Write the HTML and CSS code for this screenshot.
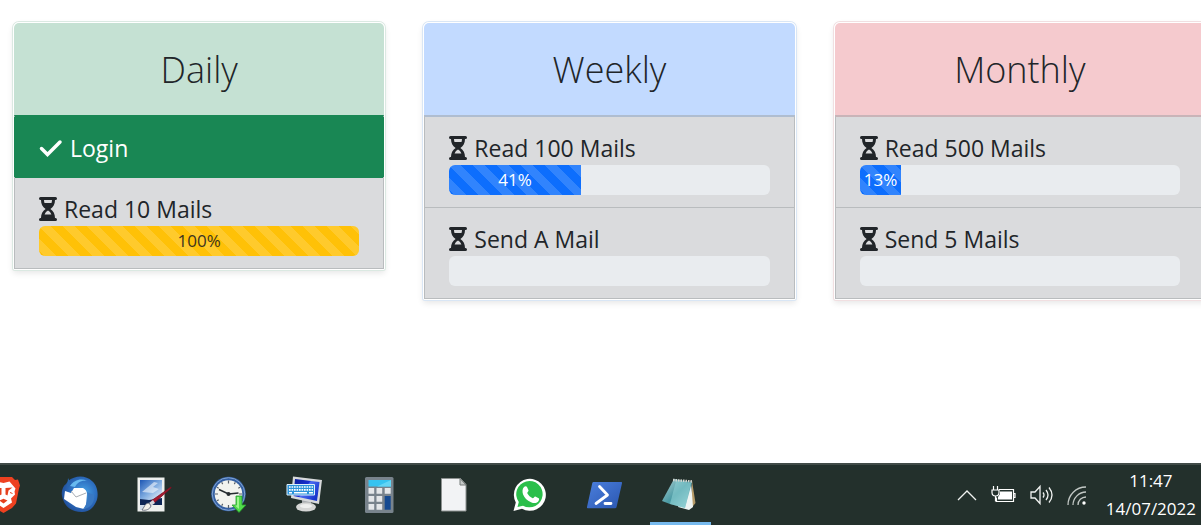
FILE: index.html
```html
<!DOCTYPE html>
<html lang="en">
<head>
    <meta charset="UTF-8">
    <meta name="viewport" content="width=device-width, initial-scale=1.0">
    <title>Quests</title>
    <link rel="stylesheet" href="styles.css">
</head>
<body>
    <!-- Shared icons -->
    <svg class="sprite" aria-hidden="true">
        <symbol id="hourglass" viewBox="0 0 18 24">
            <path d="M1.500 0h15a1.500 1.500 0 0 1 0 3H16c0 4-1.500 7-4.600 9 3.100 2 4.600 5 4.600 9h.5a1.500 1.500 0 0 1 0 3h-15a1.500 1.500 0 0 1 0-3H2c0-4 1.500-7 4.600-9C3.500 10 2 7 2 3h-.5a1.500 1.500 0 0 1 0-3zM5 3c0 1.100.2 2.100.5 3h7c.3-.9.5-1.900.5-3zm4 10.500c-1.500.8-2.700 2.200-3.400 4h6.800c-.7-1.800-1.900-3.200-3.400-4z" fill="currentColor" fill-rule="evenodd"/>
        </symbol>
    </svg>

    <main class="quests">
        <section class="card daily">
            <h2>Daily</h2>
            <ul>
                <li class="done">
                    <div class="title">
                        <svg class="check" viewBox="0 0 24 18"><path d="M2.500 9.500l6 6L21 3" fill="none" stroke="currentColor" stroke-width="3.500" stroke-linecap="round"/></svg>
                        Login
                    </div>
                </li>
                <li>
                    <div class="title"><svg class="glass"><use href="#hourglass"/></svg>Read 10 Mails</div>
                    <div class="progress" role="progressbar" aria-label="Read 10 Mails" aria-valuenow="100">
                        <div class="bar full" style="width: 100%">100%</div>
                    </div>
                </li>
            </ul>
        </section>

        <section class="card weekly">
            <h2>Weekly</h2>
            <ul>
                <li>
                    <div class="title"><svg class="glass"><use href="#hourglass"/></svg>Read 100 Mails</div>
                    <div class="progress" role="progressbar" aria-label="Read 100 Mails" aria-valuenow="41">
                        <div class="bar" style="width: 41%">41%</div>
                    </div>
                </li>
                <li>
                    <div class="title"><svg class="glass"><use href="#hourglass"/></svg>Send A Mail</div>
                    <div class="progress" role="progressbar" aria-label="Send A Mail" aria-valuenow="0"></div>
                </li>
            </ul>
        </section>

        <section class="card monthly">
            <h2>Monthly</h2>
            <ul>
                <li>
                    <div class="title"><svg class="glass"><use href="#hourglass"/></svg>Read 500 Mails</div>
                    <div class="progress" role="progressbar" aria-label="Read 500 Mails" aria-valuenow="13">
                        <div class="bar" style="width: 13%">13%</div>
                    </div>
                </li>
                <li>
                    <div class="title"><svg class="glass"><use href="#hourglass"/></svg>Send 5 Mails</div>
                    <div class="progress" role="progressbar" aria-label="Send 5 Mails" aria-valuenow="0"></div>
                </li>
            </ul>
        </section>
    </main>

    <footer class="taskbar">
        <div class="apps">
            <button aria-label="Brave">
                <svg viewBox="0 0 40 40">
                    <path d="M10 3h17l3 3 3-.5 2 6-1 3-3 15-4 4.500-8.500 5-8.500-5-4-4.500-3-15-1-3 2-6 3 .5z" fill="#ee4120"/>
                    <path d="M18.500 9l6-1.500 6 7-1 3 .5 3-4 4 1 4-8.500 5.500-8.500-5.500 1-4-4-4 .5-3-1-3 6-7z" fill="#fff"/>
                    <path d="M20.500 14l7-.5-4 3-1 5-2-1zM16.500 14l-7-.5 4 3 1 5 2-1z" fill="#e5401d"/>
                    <path d="M14.500 26.500l4-1.800 4 1.800-4 3z" fill="#e5401d"/>
                    <path d="M27.500 19.500l-2.500-1M9.500 19.500l2.500-1" stroke="#e5401d" stroke-width="1"/>
                </svg>
            </button>
            <button aria-label="Thunderbird">
                <svg viewBox="0 0 40 40">
                    <defs>
                        <radialGradient id="bird" cx=".6" cy=".45" r=".6"><stop offset="0" stop-color="#48a3e6"/><stop offset=".6" stop-color="#2d6fc0"/><stop offset="1" stop-color="#21509c"/></radialGradient>
                    </defs>
                    <path d="M2 22C1 17 3 12 6 10l2-3C15 1 26 1 32 7c6 5 7 15 4 21-3 7-8 10-14 10C11 38 4 32 2 22z" fill="url(#bird)"/>
                    <path d="M10 12C14 6 21 4 27 7c-6-1-10 2-12 6" fill="#67b9ef"/>
                    <path d="M8 4l3 6-4 5z" fill="#2864ad"/>
                    <path d="M5 17l6 2 3-5 9 0c2 1 4 3 4 6l-1 11-2 4-8-2L4 25z" fill="#fff"/>
                    <path d="M11 17l5 6 10-4" fill="none" stroke="#a9aeb4" stroke-width="1"/>
                    <path d="M27 18c2 5 0 13-4 17 8-1 12-7 11-14" fill="#3979c3"/>
                </svg>
            </button>
            <button aria-label="Paint">
                <svg viewBox="0 0 40 40">
                    <defs>
                        <linearGradient id="sky" x1="0" y1="0" x2="1" y2="1"><stop offset="0" stop-color="#1c56b4"/><stop offset=".5" stop-color="#7eabe0"/><stop offset="1" stop-color="#f3f8fc"/></linearGradient>
                    </defs>
                    <path d="M2.500 3.500h27v34h-27z" fill="#eef0ee"/>
                    <path d="M5 6h22v20H5z" fill="url(#sky)"/>
                    <path d="M7 18l6-5 6-5 4 1-5 4 6 2-6 4z" fill="#fff" opacity=".55"/>
                    <path d="M5 25l9 1 13-2v7H5z" fill="#0d2556"/>
                    <path d="M5 31h11l-8 5H5z" fill="#cfdaea"/>
                    <path d="M36 13L16 27l2 3L36 14z" fill="#a8192f" stroke="#7a1022" stroke-width=".8"/>
                    <path d="M18 26l-4 3 2 3 4-3z" fill="#d5d8de"/>
                    <path d="M14 29c-3 0-4 2-5 4l-2 3c4 1 8-1 9-4z" fill="#f4f1ec" stroke="#555d70" stroke-width=".8"/>
                </svg>
            </button>
            <button aria-label="Scheduler">
                <svg viewBox="0 0 40 40">
                    <circle cx="18.500" cy="20" r="17.300" fill="#3560a3"/>
                    <circle cx="18.500" cy="20" r="16.300" fill="none" stroke="#82a4d2" stroke-width="1"/>
                    <circle cx="18.500" cy="20" r="13.800" fill="#f2f3ef"/>
                    <path d="M18.500 6.500v3M18.500 31v3M5 20h3M29 20h3M11.700 8.300l1 1.800M25.300 8.300l-1 1.800M7 13.200l1.700 1M7 26.800l1.700-1M11.700 31.700l1-1.800M30 13.200l-1.700 1" stroke="#59616a" stroke-width="1.200"/>
                    <path d="M9 15.500l9.500 4.500 10-1" fill="none" stroke="#252b30" stroke-width="1.500"/>
                    <circle cx="18.500" cy="20" r="2" fill="#252b30"/>
                    <path d="M26 22h6v9h4l-7 7.500-7-7.500h4z" fill="#52dc4c" stroke="#249b2c" stroke-width=".8"/>
                    <path d="M27 23h2v12l-4-3.500h2z" fill="#9cf58c"/>
                </svg>
            </button>
            <button aria-label="On-screen keyboard">
                <svg viewBox="0 0 40 40">
                    <defs>
                        <linearGradient id="screen" x1="0" y1="0" x2="1" y2=".6"><stop offset="0" stop-color="#0b1e98"/><stop offset=".5" stop-color="#182fd0"/><stop offset=".55" stop-color="#4c6cf0"/><stop offset="1" stop-color="#1736cc"/></linearGradient>
                    </defs>
                    <path d="M17 25l9 2v6h-9z" fill="#a8acaf"/>
                    <ellipse cx="21" cy="33" rx="10" ry="4.500" fill="#d5d6d5"/>
                    <ellipse cx="21" cy="32" rx="6" ry="2" fill="#eeefee"/>
                    <path d="M8 2.500L37 6l-3 24L6 24z" fill="#d7d9db"/>
                    <path d="M10 5l24.500 3L32 27 8.500 22z" fill="url(#screen)"/>
                    <path d="M2 10.500h27.500v10.500H2z" fill="#2b93da" stroke="#dceefa" stroke-width="1"/>
                    <path d="M4 13h24M4 15.800h24" stroke="#fff" stroke-width="1.700" stroke-dasharray="1.700 .8"/>
                    <path d="M4 18.700h3M9 18.700h13M24 18.700h4" stroke="#fff" stroke-width="1.600"/>
                </svg>
            </button>
            <button aria-label="Calculator">
                <svg viewBox="0 0 40 40">
                    <rect x="5" y="3" width="28.500" height="36" rx="1.500" fill="#78838c"/>
                    <path d="M8.500 6H31v6.500H8.500z" fill="#36c3f0"/>
                    <path d="M31 6v6.500H17z" fill="#62d5f5"/>
                    <path d="M8.500 14h5.700v5.700H8.500zM16.500 14h5.700v5.700h-5.700zM24.700 14h6v5.700h-6zM8.500 22h5.700v5.700H8.500zM16.500 22h5.700v5.700h-5.700zM8.500 30h5.700v5.700H8.500zM16.500 30h5.700v5.700h-5.700z" fill="#e4e7e9"/>
                    <path d="M24.700 22h6v13.700h-6z" fill="#154a91"/>
                </svg>
            </button>
            <button aria-label="Document">
                <svg viewBox="0 0 40 40">
                    <path d="M6.500 4.500h19l5.500 6V37H6.500z" fill="#f2f3f5" stroke="#8d9190" stroke-width="1"/>
                    <path d="M25 4.500v6.500h6z" fill="#c7cac9" stroke="#777d7b" stroke-width="1"/>
                </svg>
            </button>
            <button aria-label="WhatsApp">
                <svg viewBox="0 0 40 40">
                    <path d="M3.500 37l2.300-8.500A16 16 0 1 1 12 34.800z" fill="#fff"/>
                    <path d="M7.500 33l1.300-5A13.200 13.200 0 1 1 13 31.700z" fill="#2bbf4b"/>
                    <path d="M14 13c1-1 2.500-1 3 0l1.500 3.300c.4 1-1.500 2.200-1.200 2.900 1.200 2.200 3 4 5.400 5 .8.300 1.700-2 2.600-1.700l3.400 1.700c.8.500.3 2.500-.7 3.500-1.800 1.800-4.300 1.700-7 .5-4-1.700-6.600-4.500-8-8-.8-2.500-.7-5.500 1-7.200z" fill="#fff"/>
                </svg>
            </button>
            <button aria-label="PowerShell">
                <svg viewBox="0 0 40 40">
                    <defs>
                        <linearGradient id="shell" x1="0" y1="0" x2="1" y2="1"><stop offset="0" stop-color="#4b7fdd"/><stop offset="1" stop-color="#2a56b0"/></linearGradient>
                    </defs>
                    <path d="M8.500 8H36a1 1 0 0 1 1 1.300l-5.500 24a1.500 1.500 0 0 1-1.400 1H3a1 1 0 0 1-1-1.300L7.300 9A1.500 1.500 0 0 1 8.500 8z" fill="url(#shell)"/>
                    <path d="M14.500 12.500l8 8.500L11 29.500M20 29.500h6" fill="none" stroke="#fff" stroke-width="2.800" stroke-linecap="round" stroke-linejoin="round"/>
                </svg>
            </button>
            <button class="open" aria-label="Notepad">
                <svg viewBox="0 0 40 40">
                    <defs>
                        <linearGradient id="note" x1="0" y1="0" x2="1" y2="1"><stop offset="0" stop-color="#b5d3d5"/><stop offset=".5" stop-color="#4a9aa4"/><stop offset="1" stop-color="#a9dcdf"/></linearGradient>
                    </defs>
                    <path d="M32 7l3.500 22-4 5z" fill="#b69b68"/>
                    <path d="M31 7l2 26-4 3-11-3z" fill="#eef4f3"/>
                    <path d="M14 5L2 27l8 3 15 4 7-26z" fill="url(#note)"/>
                    <path d="M16 7L10 30l15 4 6-25z" fill="#8ed0d4" opacity=".6"/>
                    <path d="M13 6l20 1.500" stroke="#d3d6d0" stroke-width="2.500" stroke-dasharray="1.500 1"/>
                </svg>
            </button>
        </div>

        <div class="tray">
            <button aria-label="Show hidden icons">
                <svg width="20" height="24" viewBox="0 0 20 24"><path d="M1 17l9-9 9 9" fill="none" stroke="#f0f2f1" stroke-width="1.300"/></svg>
            </button>
            <button aria-label="Battery">
                <svg width="25" height="24" viewBox="0 0 25 24">
                    <path d="M8 6.500h14.500v12H5.500v-4M22.500 10.500H24v4h-1.500" fill="none" stroke="#fff" stroke-width="1.200"/>
                    <path d="M9 8.500h12v8H7V14l2-3z" fill="#fff"/>
                    <path d="M2.500 3v4M6.500 3v4M1 7h7v2.500C8 12 6.500 13 4.500 13S1 12 1 9.500zM4.500 13v5.500" fill="#23302c" stroke="#fff" stroke-width="1.200"/>
                </svg>
            </button>
            <button aria-label="Volume">
                <svg width="23" height="24" viewBox="0 0 23 24" fill="none" stroke="#f0f2f1" stroke-width="1.300">
                    <path d="M1 9h4l5-5.500v17L5 15H1z"/>
                    <path d="M13 9.500q2 2.500 0 5M16 7q4 5 0 10M19 4.500q6 7.500 0 15"/>
                </svg>
            </button>
            <button aria-label="Network">
                <svg width="20" height="24" viewBox="0 0 20 24" fill="none" stroke="#c2c8c5" stroke-width="1.300">
                    <path d="M1 22C1 12 9 4 19 4M6 22C6 15 12 9 19 9M11 22c0-4.500 3.500-8 8-8"/>
                    <circle cx="17" cy="20" r="1.700" fill="#fff" stroke="none"/>
                </svg>
            </button>
            <div class="clock">
                <time>11:47</time>
                <time datetime="2022-07-14">14/07/2022</time>
            </div>
        </div>
    </footer>
</body>
</html>
```
FILE: styles.css
```css
* {
    box-sizing: border-box;
}
body {
    font-family: "Open Sans", "Noto Sans", sans-serif;
    display: flex;
    flex-direction: column;
    min-height: 100vh;
    margin: 0;
    color: #212529;
    background-color: #fff;
    overflow-x: hidden;
}
button {
    padding: 0;
    border: none;
    background: none;
    cursor: pointer;
}
svg {
    display: block;
    flex: none;
}
.sprite {
    display: none;
}

/* Cards */
.quests {
    flex: 1;
    display: grid;
    grid-template-columns: repeat(3, 1fr);
    align-items: start;
    gap: 38px;
    margin: 22px -5px 24px 13px;
}
.card {
    --tint: #c5e1d3;
    --line: #b9bcbe;
    --ring: #dbe9e2;
    border: 1px solid #fff;
    border-radius: 6px 6px 2px 2px;
    box-shadow: 0 0 0 1px var(--ring), 0 3px 6px rgba(0, 0, 0, 0.1);
}
.weekly {
    --tint: #c2daff;
    --line: #afbdd0;
    --ring: #d9e6f5;
}
.monthly {
    --tint: #f5cace;
    --line: #c9b4b8;
    --ring: #f1dfe1;
}
.card h2 {
    margin: 0;
    padding: 24px 24px 22px;
    font-size: 36px;
    font-weight: 300;
    line-height: 46px;
    text-align: center;
    background-color: var(--tint);
    border-radius: 5px 5px 0 0;
}
.card ul {
    margin: 0;
    padding: 0;
    list-style: none;
    background-color: #dadbdd;
    border: 1px solid #b9bcbe;
    border-top: 2px solid var(--line);
}
.daily ul {
    border-top-color: #198754;
}
.card li {
    padding: 12px 24px;
}
.card li + li {
    border-top: 1px solid #b9bcbe;
}
.card .done {
    margin: 0 -1px;
    padding: 12px 25px;
    color: #fff;
    background-color: #198754;
}
.card .done + li {
    border-top-color: #198754;
}
.title {
    display: flex;
    align-items: center;
    gap: 7px;
    padding-top: 2px;
    font-size: 23px;
    line-height: 34px;
}
.glass {
    width: 18px;
    height: 24px;
}
.check {
    width: 24px;
    height: 18px;
}
.progress {
    height: 30px;
    overflow: hidden;
    background-color: #e9ecef;
    border-radius: 6px;
}
.bar {
    font-size: 17px;
    line-height: 30px;
    text-align: center;
    white-space: nowrap;
    color: #fff;
    background-color: #0d6efd;
    background-image: linear-gradient(45deg, rgba(255, 255, 255, 0.15) 25%, transparent 25%, transparent 50%, rgba(255, 255, 255, 0.15) 50%, rgba(255, 255, 255, 0.15) 75%, transparent 75%, transparent);
    background-size: 24px 24px;
}
.bar.full {
    color: #3c3420;
    background-color: #ffc107;
}

/* Taskbar */
.taskbar {
    display: flex;
    justify-content: space-between;
    height: 62px;
    color: #fff;
    background-color: #23302c;
    border-top: 2px solid #414b48;
}
.apps {
    display: flex;
    gap: 14px;
    margin-left: -25px;
}
.apps button {
    display: flex;
    align-items: center;
    justify-content: center;
    width: 61px;
    padding: 1px 1px 0 0;
    border-bottom: 3px solid transparent;
}
.apps button.open {
    border-bottom-color: #76b9ed;
}
.apps svg {
    width: 40px;
    height: 40px;
}
.tray {
    display: flex;
    align-items: center;
    gap: 14px;
    padding-right: 5px;
}
.clock {
    display: flex;
    flex-direction: column;
    margin-left: 5px;
    font-size: 17px;
    line-height: 28px;
    text-align: center;
}
```
